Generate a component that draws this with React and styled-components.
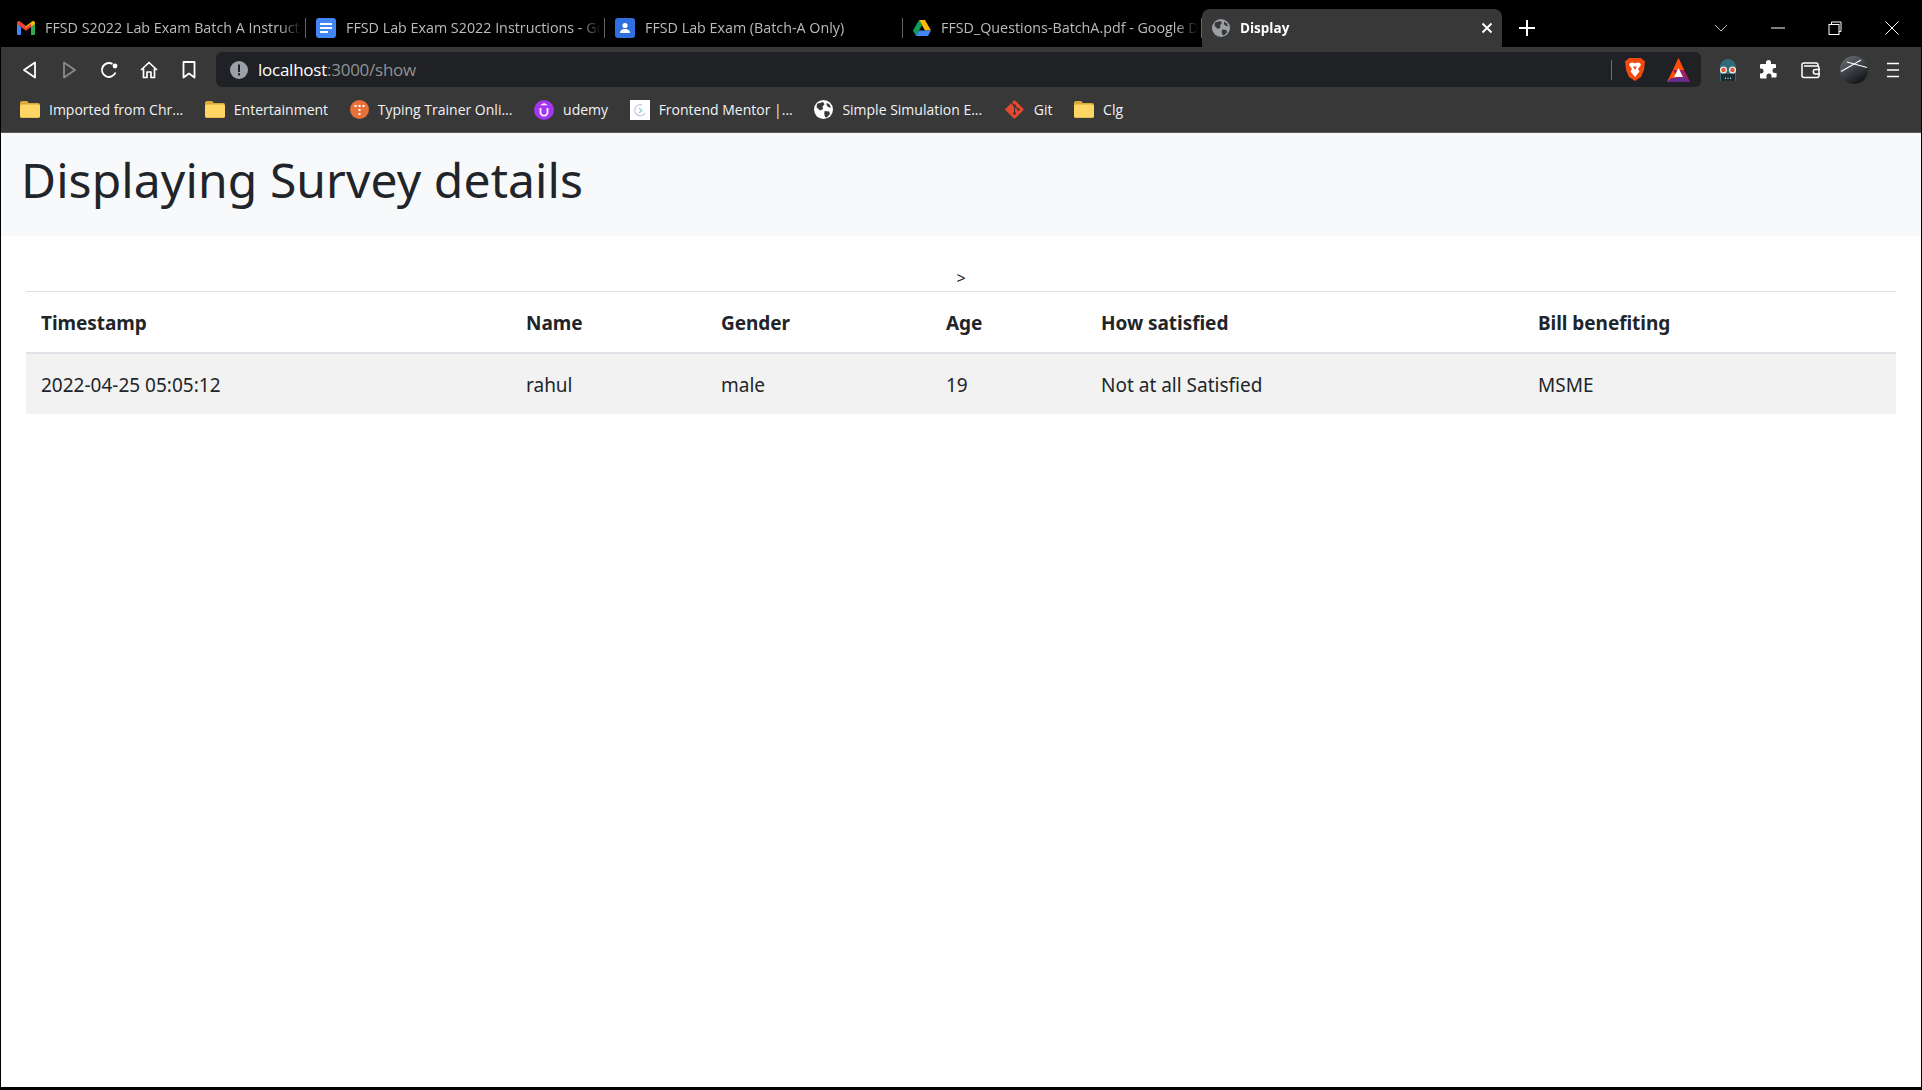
import React from "react";
import styled, { createGlobalStyle } from "styled-components";
import { FaGitAlt } from "react-icons/fa";

const GlobalStyle = createGlobalStyle`
  html, body {
    margin: 0;
    padding: 0;
    background: #000;
  }
  * {
    box-sizing: border-box;
  }
`;

const Window = styled.div`
  width: 1922px;
  height: 1090px;
  background: #000;
  padding: 0 1px 3px 1px;
  display: flex;
  flex-direction: column;
  overflow: hidden;
  font-family: "Open Sans", "Noto Sans", sans-serif;
`;

const TabStrip = styled.div`
  height: 47px;
  flex: none;
  padding: 9px 0 0 6px;
  display: flex;
  align-items: stretch;
  background: #000;
`;

const Tab = styled.div`
  width: ${(p) => p.$width}px;
  display: flex;
  align-items: center;
  gap: 10px;
  padding: 0 ${(p) => (p.$active ? 9 : 3)}px 0 10px;
  position: relative;
  background: ${(p) => (p.$active ? "#383838" : "transparent")};
  border-radius: ${(p) => (p.$active ? "8px 8px 0 0" : "0")};
  color: ${(p) => (p.$active ? "#fff" : "#b9bcbf")};
  font-size: ${(p) => (p.$active ? 13.5 : 14.3)}px;
  font-weight: ${(p) => (p.$active ? 700 : 400)};
`;

const TabDivider = styled.div`
  width: 1px;
  flex: none;
  margin: 9px 0 9px 0;
  background: #5f6368;
`;

const TabTitle = styled.span`
  flex: 1;
  min-width: 0;
  white-space: nowrap;
  padding-bottom: ${(p) => (p.$active ? 0 : 2)}px;
  -webkit-mask-image: linear-gradient(to right, #000 calc(100% - 22px), transparent 100%);
  mask-image: linear-gradient(to right, #000 calc(100% - 22px), transparent 100%);
`;

const NewTab = styled.div`
  width: 50px;
  display: flex;
  align-items: center;
  justify-content: center;
`;

const WindowControls = styled.div`
  margin-left: auto;
  padding-right: 1px;
  display: flex;
  align-items: center;
`;

const WindowButton = styled.div`
  width: 57px;
  display: flex;
  justify-content: center;
  align-items: center;
`;

const Toolbar = styled.div`
  height: 45px;
  flex: none;
  background: #383838;
  display: flex;
  align-items: flex-start;
  padding: 5px 0 0 8px;
`;

const NavIcon = styled.div`
  width: ${(p) => p.$width || 40}px;
  height: 35px;
  flex: none;
  display: flex;
  align-items: center;
  justify-content: center;
`;

const AddressBar = styled.div`
  width: 1485px;
  height: 35px;
  flex: none;
  margin-left: 7px;
  background: #202124;
  border-radius: 6px;
  display: flex;
  align-items: center;
  padding: 0 11px 0 14px;
`;

const Url = styled.div`
  margin-left: 10px;
  font-size: 17px;
  color: #8f9296;
  letter-spacing: -0.25px;
  flex: 1;
  span {
    color: #fff;
  }
`;

const AddressDivider = styled.div`
  width: 1px;
  height: 20px;
  background: #6b6e72;
  margin-right: 13px;
`;

const ShieldSlot = styled.div`
  width: ${(p) => p.$width}px;
  display: flex;
`;

const Bookmarks = styled.div`
  height: 40px;
  flex: none;
  background: #383838;
  display: flex;
  align-items: center;
  gap: 21.6px;
  padding: 0 0 5px 19px;
`;

const Bookmark = styled.div`
  display: flex;
  align-items: center;
  gap: 9px;
  color: #f1f3f4;
  font-size: 14px;
  white-space: nowrap;
`;

const Page = styled.div`
  flex: 1;
  background: #fff;
  border-top: 1px solid #5a5a5a;
  font-family: "Noto Sans", sans-serif;
  color: #212529;
`;

const Navbar = styled.div`
  height: 103px;
  background: #f8f9fa;
  padding-left: 20px;
  display: flex;
  align-items: center;
`;

const Brand = styled.h1`
  margin: 0;
  font-size: 48px;
  font-weight: 400;
  letter-spacing: 0.1px;
  padding-bottom: 11px;
`;

const Content = styled.div`
  padding: 29px 25px 0;
`;

const Stray = styled.div`
  text-align: center;
  font-size: 16px;
  line-height: 26px;
`;

const Table = styled.table`
  width: 1870px;
  table-layout: fixed;
  border-collapse: collapse;
  font-size: 19px;
`;

const HeadCell = styled.th`
  height: 61px;
  padding: 2px 15px 0;
  text-align: left;
  font-weight: 700;
  font-size: 19px;
  letter-spacing: -0.05px;
  border-top: 1px solid #dee2e6;
  border-bottom: 2px solid #dee2e6;
`;

const Cell = styled.td`
  height: 61px;
  padding: 2px 15px 0;
  background: #f2f2f2;
  font-weight: 400;
`;

const Col = styled.col`
  width: ${(p) => p.$width}px;
`;

const GmailIcon = () => (
  <svg width="18" height="14" viewBox="0 0 18 14">
    <path d="M0 2.2V13a1 1 0 0 0 1 1h3V6z" fill="#4285f4" />
    <path d="M18 2.2V13a1 1 0 0 1-1 1h-3V6z" fill="#34a853" />
    <path d="M4 6 L0 3 V2 C0 .4 1.8 -.5 3 .4L9 5l-2 3z" fill="#ea4335" />
    <path d="M14 6l4-3V2c0-1.6-1.8-2.5-3-1.6L9 5 7 6.5 9 8z" fill="#fbbc04" />
    <path d="M4 2.6 9 6.4l5-3.8V6L9 9.7 4 6z" fill="#ea4335" />
  </svg>
);

const DocsIcon = () => (
  <svg width="20" height="20" viewBox="0 0 20 20">
    <rect width="20" height="20" rx="3" fill="#4285f4" />
    <path d="M4 5h12v2H4zM4 9h12v2H4zM4 13h8v2H4z" fill="#fff" />
  </svg>
);

const FormsIcon = () => (
  <svg width="20" height="20" viewBox="0 0 20 20">
    <rect width="20" height="20" rx="3" fill="#2f6fde" />
    <circle cx="10" cy="7.5" r="2.6" fill="#fff" />
    <path d="M5 15c0-3 2.4-4 5-4s5 1 5 4z" fill="#fff" />
  </svg>
);

const DriveIcon = () => (
  <svg width="18" height="16" viewBox="0 0 18 16">
    <path d="M6 0h6l6 10.5h-6z" fill="#fbbc04" />
    <path d="M6 0l3 5.3L3 16 0 10.5z" fill="#0f9d58" />
    <path d="M3 16l3-5.5h12L15 16z" fill="#4285f4" />
  </svg>
);

const GlobeIcon = ({ size = 18, fill = "#9aa0a6", land = "#383838" }) => (
  <svg width={size} height={size} viewBox="0 0 18 18">
    <circle cx="9" cy="9" r="9" fill={fill} />
    <path
      d="M3 3.5 8.5 2l1.5 2-2 2.2.6 2.4L5.8 10 2.4 6.8zM10 10.5l4.5.5.5 2.5-3 3-1.5-.5-.8-3zM12 2.5l3 2 1 3-2.4-.8-1.6-1.4z"
      fill={land}
    />
  </svg>
);

const FolderIcon = () => (
  <svg width="20" height="17" viewBox="0 0 20 17">
    <path d="M0 2a2 2 0 0 1 2-2h5l2 2h9a2 2 0 0 1 2 2v11a2 2 0 0 1-2 2H2a2 2 0 0 1-2-2z" fill="#d9a93a" />
    <rect y="3.5" width="20" height="13" rx="1.5" fill="#fdd663" />
  </svg>
);

const TrainerIcon = () => (
  <svg width="19" height="19" viewBox="0 0 19 19">
    <circle cx="9.5" cy="9.5" r="9.5" fill="#e8703a" />
    <path d="M4.5 5h2v2h-2zM8.5 5h2v2h-2zM12.5 5h2v2h-2zM8.5 9h2v2h-2zM8.5 13h2v2h-2z" fill="#fff" />
  </svg>
);

const UdemyIcon = () => (
  <svg width="20" height="20" viewBox="0 0 20 20">
    <circle cx="10" cy="10" r="10" fill="#a435f0" />
    <path d="M6.5 8v4.2a3.5 3.5 0 0 0 7 0V8" fill="none" stroke="#fff" strokeWidth="1.8" />
    <path d="M10 3 14 5.3H6z" fill="#fff" />
  </svg>
);

const MentorIcon = () => (
  <svg width="20" height="20" viewBox="0 0 20 20">
    <rect width="20" height="20" fill="#fff" />
    <path d="M12 5a5.5 5.5 0 1 0 3 8" fill="none" stroke="#b9c4e4" strokeWidth="1.2" />
    <path d="M9 8l3 2.5L9 13" fill="none" stroke="#7fd6d0" strokeWidth="1.2" />
  </svg>
);

const BackIcon = ({ color = "#fff", flip }) => (
  <svg width="15" height="18" viewBox="0 0 15 18" style={flip ? { transform: "scaleX(-1)" } : undefined}>
    <path d="M13 1.5v15L2 9z" fill="none" stroke={color} strokeWidth="1.8" strokeLinejoin="round" />
  </svg>
);

const ReloadIcon = () => (
  <svg width="18" height="18" viewBox="0 0 18 18">
    <path d="M15.5 11.5A7 7 0 1 1 12.5 2.9" fill="none" stroke="#fff" strokeWidth="1.9" />
    <circle cx="15" cy="5" r="2.4" fill="#fff" />
  </svg>
);

const HomeIcon = () => (
  <svg width="18" height="18" viewBox="0 0 18 18">
    <path
      d="M1 9 9 1.5 17 9M3.5 7.5V16.5H7V11h4v5.5h3.5V7.5"
      fill="none"
      stroke="#fff"
      strokeWidth="1.7"
      strokeLinejoin="round"
    />
  </svg>
);

const BookmarkIcon = () => (
  <svg width="14" height="18" viewBox="0 0 14 18">
    <path d="M1.5 1h11v15.5L7 12.5l-5.5 4z" fill="none" stroke="#fff" strokeWidth="1.8" strokeLinejoin="round" />
  </svg>
);

const InfoIcon = () => (
  <svg width="18" height="18" viewBox="0 0 18 18">
    <circle cx="9" cy="9" r="9" fill="#9aa0a6" />
    <rect x="8" y="3.5" width="2" height="7.5" fill="#202124" />
    <rect x="8" y="12.2" width="2" height="2.2" fill="#202124" />
  </svg>
);

const BraveIcon = () => (
  <svg width="20" height="23" viewBox="0 0 20 23">
    <path d="M4 0h12l2 2 2 1-1 9-3 7-6 4-6-4-3-7L0 3l2-1z" fill="#f1490f" />
    <path d="M5 5l3-.5L10 5.5l2-1 3 .5 1 2-3 4 1.5 2.5L10 19l-4.5-5.5L7 11 4 7z" fill="#fff" />
    <path d="M8 8.5h4L10 12z" fill="#f1490f" />
  </svg>
);

const BatIcon = () => (
  <svg width="23" height="24" viewBox="0 0 23 24">
    <path d="M11.5 0 23 24H0z" fill="#9e1f63" />
    <path d="M11.5 0 17 12H6z" fill="#ff5000" />
    <path d="M0 24l6-12 3.5 6-3 6z" fill="#ff5000" />
    <path d="M0 24l4-4h15l4 4z" fill="#662d91" />
    <path d="M11.5 10 16 19H7z" fill="#fff" />
  </svg>
);

const GhostIcon = () => (
  <svg width="20" height="22" viewBox="0 0 20 22">
    <path d="M2 8a8 8 0 0 1 16 0v14H2z" fill="#2f6a78" />
    <rect x="3" y="15" width="14" height="7" fill="#1b2d33" />
    <circle cx="5.5" cy="11" r="3.6" fill="#f2e6dc" />
    <circle cx="14.5" cy="11" r="3.6" fill="#f2e6dc" />
    <circle cx="5.5" cy="11" r="2.2" fill="#e0583a" />
    <circle cx="14.5" cy="11" r="2.2" fill="#e0583a" />
    <path d="M7 18.5h1V20H7zM9.5 18.5h1V20h-1zM12 18.5h1V20h-1z" fill="#9fc6cf" />
  </svg>
);

const PuzzleIcon = () => (
  <svg width="19" height="19" viewBox="0 0 19 19">
    <path
      d="M7 2.5a2.5 2.5 0 0 1 5 0V4h4a1 1 0 0 1 1 1v3h-1a2.5 2.5 0 0 0 0 5h1.6v3.5a1 1 0 0 1-1 1H12.5V16a2.5 2.5 0 0 0-5 0v2.5H2a1 1 0 0 1-1-1v-4h1a2.5 2.5 0 0 0 0-5H1V5a1 1 0 0 1 1-1h5z"
      fill="#fff"
    />
  </svg>
);

const WalletIcon = () => (
  <svg width="20" height="18" viewBox="0 0 20 18">
    <path d="M1 4a2 2 0 0 1 2-2h12a2 2 0 0 1 2 2v1" fill="none" stroke="#fff" strokeWidth="1.5" />
    <path d="M1 4v10.5a2 2 0 0 0 2 2h13a2 2 0 0 0 2-2V7a2 2 0 0 0-2-2H3" fill="none" stroke="#fff" strokeWidth="1.5" />
    <path d="M19 8.5h-4.5a2.2 2.2 0 0 0 0 4.4H19" fill="none" stroke="#fff" strokeWidth="1.5" />
  </svg>
);

const AvatarIcon = () => (
  <svg width="28" height="28" viewBox="0 0 28 28">
    <defs>
      <linearGradient id="avatarShade" x1="0" y1="0" x2="0.6" y2="1">
        <stop offset="0" stopColor="#70747c" />
        <stop offset="1" stopColor="#14161a" />
      </linearGradient>
    </defs>
    <circle cx="14" cy="14" r="14" fill="url(#avatarShade)" />
    <path d="M1 15.5 21 4M7 6l20 5.5" stroke="#fff" strokeWidth="1.1" fill="none" />
  </svg>
);

const MenuIcon = () => (
  <svg width="14" height="16" viewBox="0 0 14 16">
    <path d="M1 1.5h12M1 8h12M1 14.5h12" stroke="#fff" strokeWidth="1.5" />
  </svg>
);

const tabs = [
  { icon: <GmailIcon />, title: "FFSD S2022 Lab Exam Batch A Instruct", width: 298 },
  { icon: <DocsIcon />, title: "FFSD Lab Exam S2022 Instructions - Go", width: 298 },
  { icon: <FormsIcon />, title: "FFSD Lab Exam (Batch-A Only)", width: 297 },
  { icon: <DriveIcon />, title: "FFSD_Questions-BatchA.pdf - Google D", width: 298 },
];

const bookmarks = [
  { icon: <FolderIcon />, label: "Imported from Chr..." },
  { icon: <FolderIcon />, label: "Entertainment" },
  { icon: <TrainerIcon />, label: "Typing Trainer Onli..." },
  { icon: <UdemyIcon />, label: "udemy" },
  { icon: <MentorIcon />, label: "Frontend Mentor |..." },
  { icon: <GlobeIcon size={19} fill="#fff" />, label: "Simple Simulation E..." },
  { icon: <FaGitAlt size={21} color="#e8482e" />, label: "Git" },
  { icon: <FolderIcon />, label: "Clg" },
];

const columns = [
  { title: "Timestamp", value: "2022-04-25 05:05:12", width: 485 },
  { title: "Name", value: "rahul", width: 195 },
  { title: "Gender", value: "male", width: 225 },
  { title: "Age", value: "19", width: 155 },
  { title: "How satisfied", value: "Not at all Satisfied", width: 437 },
  { title: "Bill benefiting", value: "MSME", width: 373 },
];

function App() {
  return (
    <Window>
      <GlobalStyle />
      <TabStrip>
        {tabs.map((tab) => (
          <React.Fragment key={tab.title}>
            <Tab $width={tab.width}>
              {tab.icon}
              <TabTitle>{tab.title}</TabTitle>
            </Tab>
            <TabDivider />
          </React.Fragment>
        ))}
        <Tab $active $width={300}>
          <GlobeIcon />
          <TabTitle $active>Display</TabTitle>
          <svg width="12" height="12" viewBox="0 0 12 12">
            <path d="M1.5 1.5l9 9M10.5 1.5l-9 9" stroke="#fff" strokeWidth="1.8" />
          </svg>
        </Tab>
        <NewTab>
          <svg width="16" height="16" viewBox="0 0 16 16">
            <path d="M8 0v16M0 8h16" stroke="#fff" strokeWidth="2" />
          </svg>
        </NewTab>
        <WindowControls>
          <WindowButton>
            <svg width="14" height="8" viewBox="0 0 14 8">
              <path d="M1 1l6 6 6-6" fill="none" stroke="#bdbdbd" strokeWidth="1" />
            </svg>
          </WindowButton>
          <WindowButton>
            <svg width="14" height="2" viewBox="0 0 14 2">
              <path d="M0 1h14" stroke="#fff" strokeWidth="1" />
            </svg>
          </WindowButton>
          <WindowButton>
            <svg width="14" height="14" viewBox="0 0 14 14">
              <path d="M3.5 3V1H13v9.5h-2" fill="none" stroke="#fff" strokeWidth="1" />
              <rect x="1" y="3.5" width="10" height="10" fill="none" stroke="#fff" strokeWidth="1" />
            </svg>
          </WindowButton>
          <WindowButton>
            <svg width="14" height="14" viewBox="0 0 14 14">
              <path d="M.5.5l13 13M13.5.5l-13 13" stroke="#fff" strokeWidth="1" />
            </svg>
          </WindowButton>
        </WindowControls>
      </TabStrip>

      <Toolbar>
        <NavIcon><BackIcon /></NavIcon>
        <NavIcon><BackIcon color="#8a8a8a" flip /></NavIcon>
        <NavIcon><ReloadIcon /></NavIcon>
        <NavIcon><HomeIcon /></NavIcon>
        <NavIcon><BookmarkIcon /></NavIcon>
        <AddressBar>
          <InfoIcon />
          <Url><span>localhost</span>:3000/show</Url>
          <AddressDivider />
          <ShieldSlot $width={42}><BraveIcon /></ShieldSlot>
          <ShieldSlot $width={23}><BatIcon /></ShieldSlot>
        </AddressBar>
        <NavIcon $width={54}><GhostIcon /></NavIcon>
        <NavIcon $width={27}><PuzzleIcon /></NavIcon>
        <NavIcon $width={58}><WalletIcon /></NavIcon>
        <NavIcon $width={28}><AvatarIcon /></NavIcon>
        <NavIcon $width={50}><MenuIcon /></NavIcon>
      </Toolbar>

      <Bookmarks>
        {bookmarks.map((item) => (
          <Bookmark key={item.label}>
            {item.icon}
            {item.label}
          </Bookmark>
        ))}
      </Bookmarks>

      <Page>
        <Navbar>
          <Brand>Displaying Survey details</Brand>
        </Navbar>
        <Content>
          <Stray>&gt;</Stray>
          <Table>
            <colgroup>
              {columns.map((col) => (
                <Col key={col.title} $width={col.width} />
              ))}
            </colgroup>
            <thead>
              <tr>
                {columns.map((col) => (
                  <HeadCell key={col.title}>{col.title}</HeadCell>
                ))}
              </tr>
            </thead>
            <tbody>
              <tr>
                {columns.map((col) => (
                  <Cell key={col.title}>{col.value}</Cell>
                ))}
              </tr>
            </tbody>
          </Table>
        </Content>
      </Page>
    </Window>
  );
}

export default App;
